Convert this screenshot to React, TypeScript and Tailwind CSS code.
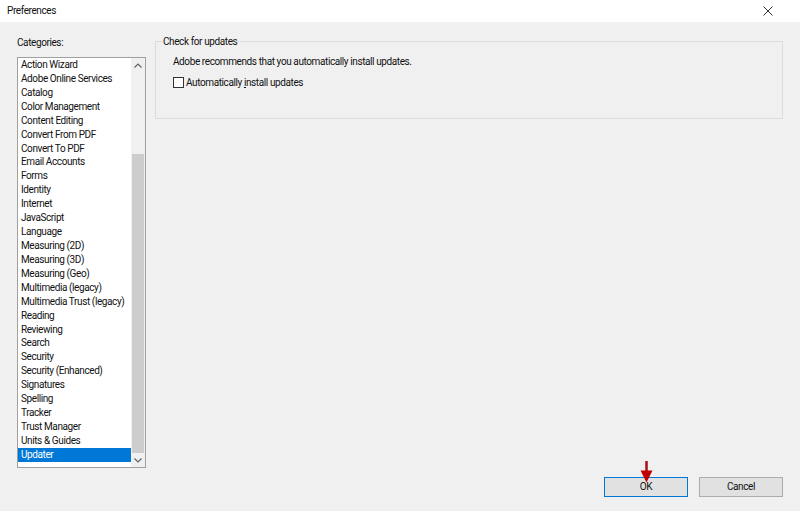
import React from "react";

const items = [
  "Action Wizard",
  "Adobe Online Services",
  "Catalog",
  "Color Management",
  "Content Editing",
  "Convert From PDF",
  "Convert To PDF",
  "Email Accounts",
  "Forms",
  "Identity",
  "Internet",
  "JavaScript",
  "Language",
  "Measuring (2D)",
  "Measuring (3D)",
  "Measuring (Geo)",
  "Multimedia (legacy)",
  "Multimedia Trust (legacy)",
  "Reading",
  "Reviewing",
  "Search",
  "Security",
  "Security (Enhanced)",
  "Signatures",
  "Spelling",
  "Tracker",
  "Trust Manager",
  "Units & Guides",
  "Updater",
];

export default function App() {
  return (
    <div
      className="w-[800px] h-[511px] bg-[#f0f0f0] flex flex-col text-[10px] tracking-[-0.4px] text-[#111] overflow-hidden"
      style={{ fontFamily: 'Roboto, "Liberation Sans", sans-serif' }}
    >
      {/* title bar */}
      <div className="h-[22px] bg-white flex items-center justify-between pl-[7px] pr-[27px] shrink-0">
        <span className="leading-none">Preferences</span>
        <svg width="10" height="10" viewBox="0 0 10 10">
          <path d="M0.5 0.5 L9.5 9.5 M9.5 0.5 L0.5 9.5" stroke="#333" strokeWidth="1" />
        </svg>
      </div>

      <div className="flex-1 flex flex-col px-[17px]">
        <div className="flex gap-[9px] pt-[13px]">
          {/* left column */}
          <div className="flex flex-col w-[129px] min-w-0 shrink-0">
            <div className="h-[15px] leading-[15px]">Categories:</div>
            <div className="mt-[7px] h-[411px] border border-[#a0a0a0] bg-white flex overflow-hidden">
              <div className="flex-1 min-w-0 flex flex-col overflow-hidden">
                {items.map((it) => (
                  <div
                    key={it}
                    className={
                      "h-[13.93px] leading-[14px] pl-[3px] whitespace-nowrap overflow-hidden " +
                      (it === "Updater" ? "bg-[#0078d7] text-white" : "")
                    }
                  >
                    {it}
                  </div>
                ))}
              </div>
              <div className="w-[14px] shrink-0 bg-[#f0f0f0] flex flex-col items-center">
                <div className="h-[14px] flex items-center justify-center">
                  <svg width="8" height="5" viewBox="0 0 8 5">
                    <path d="M0.5 4.5 L4 1 L7.5 4.5" stroke="#606060" strokeWidth="1.2" fill="none" />
                  </svg>
                </div>
                <div className="flex-1 w-full flex flex-col">
                  <div className="h-[82px]" />
                  <div className="flex-1 mx-[1px] bg-[#cdcdcd]" />
                </div>
                <div className="h-[14px] flex items-center justify-center">
                  <svg width="8" height="5" viewBox="0 0 8 5">
                    <path d="M0.5 0.5 L4 4 L7.5 0.5" stroke="#606060" strokeWidth="1.2" fill="none" />
                  </svg>
                </div>
              </div>
            </div>
          </div>

          {/* right column */}
          <div className="flex-1 min-w-0">
            <div className="relative mt-[6px] h-[78px] border border-[#dcdcdc]">
              <span className="absolute -top-[8px] left-[6px] px-[1px] bg-[#f0f0f0] leading-[15px]">
                Check for updates
              </span>
              <div className="pt-[12px] pl-[17px] leading-[15px]">
                Adobe recommends that you automatically install updates.
              </div>
              <label className="flex items-center mt-[6px] pl-[17px] leading-[15px]">
                <span className="w-[11px] h-[11px] border border-[#333] bg-white mr-[2px]" />
                <span>
                  Automatically <span className="underline">i</span>nstall updates
                </span>
              </label>
            </div>
          </div>
        </div>

        <div className="flex-1" />
        <div className="flex justify-end gap-[11px] pb-[14px]">
          <div className="relative">
            <button className="w-[84px] h-[20px] border border-[#0078d7] bg-[#e1e1e1] leading-[18px] text-center">
              OK
            </button>
            <svg
              className="absolute left-[36px] -top-[16px]"
              width="13"
              height="22"
              viewBox="0 0 13 22"
            >
              <path d="M6.5 0 L6.5 12" stroke="#a81010" strokeWidth="2.5" />
              <path d="M0.5 9.5 L12.5 9.5 L6.5 21.5 Z" fill="#c00000" />
            </svg>
          </div>
          <button className="w-[84px] h-[20px] border border-[#adadad] bg-[#e1e1e1] leading-[18px] text-center">
            Cancel
          </button>
        </div>
      </div>
    </div>
  );
}
